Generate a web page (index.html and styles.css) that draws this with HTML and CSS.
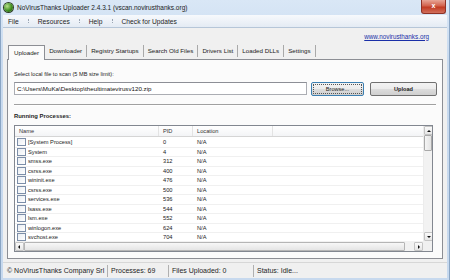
FILE: index.html
```html
<!DOCTYPE html>
<html lang="en">
<head>
    <meta charset="UTF-8">
    <title>NoVirusThanks Uploader 2.4.3.1</title>
    <link rel="stylesheet" href="styles.css">
</head>
<body>
    <div class="window">
        <!-- Barra de título -->
        <div class="titlebar">
            <span class="app-icon"></span>
            <span class="title">NoVirusThanks Uploader 2.4.3.1 (vscan.novirusthanks.org)</span>
            <span class="close-btn">x</span>
        </div>

        <!-- Menu -->
        <div class="menubar">
            <span class="menu-item">File</span>
            <span class="menu-sep"></span>
            <span class="menu-item">Resources</span>
            <span class="menu-sep"></span>
            <span class="menu-item">Help</span>
            <span class="menu-sep"></span>
            <span class="menu-item">Check for Updates</span>
        </div>

        <div class="client">
            <div class="link-row">
                <a href="#" class="site-link">www.novirusthanks.org</a>
            </div>

            <div class="tabs">
                <span class="tab active">Uploader</span>
                <span class="tab">Downloader</span>
                <span class="tab">Registry Startups</span>
                <span class="tab">Search Old Files</span>
                <span class="tab">Drivers List</span>
                <span class="tab">Loaded DLLs</span>
                <span class="tab">Settings</span>
            </div>

            <div class="panel">
                <div class="field-label">Select local file to scan (5 MB size limit):</div>
                <div class="file-row">
                    <div class="file-input">C:\Users\MuKa\Desktop\theultimatevirusv120.zip</div>
                    <button class="btn browse">Browse...</button>
                    <button class="btn upload">Upload</button>
                </div>
                <div class="separator"></div>
                <div class="field-label bold">Running Processes:</div>

                <div class="listview">
                    <div class="lv-top">
                        <div class="lv-body">
                            <div class="lv-row lv-head">
                                <span class="col-name">Name</span>
                                <span class="col-pid">PID</span>
                                <span class="col-loc">Location</span>
                            </div>
                            <div class="lv-row"><span class="col-name"><i class="check"></i>[System Process]</span><span class="col-pid">0</span><span class="col-loc">N/A</span></div>
                            <div class="lv-row"><span class="col-name"><i class="check"></i>System</span><span class="col-pid">4</span><span class="col-loc">N/A</span></div>
                            <div class="lv-row"><span class="col-name"><i class="check"></i>smss.exe</span><span class="col-pid">312</span><span class="col-loc">N/A</span></div>
                            <div class="lv-row"><span class="col-name"><i class="check"></i>csrss.exe</span><span class="col-pid">400</span><span class="col-loc">N/A</span></div>
                            <div class="lv-row"><span class="col-name"><i class="check"></i>wininit.exe</span><span class="col-pid">476</span><span class="col-loc">N/A</span></div>
                            <div class="lv-row"><span class="col-name"><i class="check"></i>csrss.exe</span><span class="col-pid">500</span><span class="col-loc">N/A</span></div>
                            <div class="lv-row"><span class="col-name"><i class="check"></i>services.exe</span><span class="col-pid">536</span><span class="col-loc">N/A</span></div>
                            <div class="lv-row"><span class="col-name"><i class="check"></i>lsass.exe</span><span class="col-pid">544</span><span class="col-loc">N/A</span></div>
                            <div class="lv-row"><span class="col-name"><i class="check"></i>lsm.exe</span><span class="col-pid">552</span><span class="col-loc">N/A</span></div>
                            <div class="lv-row"><span class="col-name"><i class="check"></i>winlogon.exe</span><span class="col-pid">624</span><span class="col-loc">N/A</span></div>
                            <div class="lv-row"><span class="col-name"><i class="check"></i>svchost.exe</span><span class="col-pid">704</span><span class="col-loc">N/A</span></div>
                        </div>
                        <div class="vscroll">
                            <span class="sb-btn up"></span>
                            <span class="sb-thumb v"></span>
                            <span class="sb-track"></span>
                            <span class="sb-btn down"></span>
                        </div>
                    </div>
                    <div class="lv-bottom">
                        <div class="hscroll">
                            <span class="sb-btn left"></span>
                            <span class="sb-thumb h"></span>
                            <span class="sb-btn right"></span>
                        </div>
                        <div class="sizebox"></div>
                    </div>
                </div>
            </div>

            <div class="statusbar">
                <span class="status-cell company">© NoVirusThanks Company Srl</span>
                <span class="status-cell procs">Processes: 69</span>
                <span class="status-cell files">Files Uploaded: 0</span>
                <span class="status-cell state">Status: Idle...</span>
            </div>
        </div>
    </div>
</body>
</html>
```

FILE: styles.css
```css
* {
    margin: 0;
    padding: 0;
    box-sizing: border-box;
    font-family: 'Liberation Sans', Arial, sans-serif;
}

body {
    width: 450px;
    height: 280px;
    overflow: hidden;
    background-color: #c3d6ec;
}

.window {
    width: 450px;
    height: 280px;
    display: flex;
    flex-direction: column;
    border-left: 1px solid #8aa5c4;
    border-right: 1px solid #8aa5c4;
    background: linear-gradient(#d9e7f6, #c8daef 60px, #c7d9ee);
}

/* Barra de título */
.titlebar {
    height: 16px;
    display: flex;
    align-items: center;
    padding-left: 3px;
    position: relative;
}

.app-icon {
    width: 9px;
    height: 9px;
    border-radius: 50%;
    background: radial-gradient(circle at 35% 35%, #b7e08a, #3f8f1f 55%, #1f4d10);
    box-shadow: 0 0 0 1px #2f3d26;
}

.title {
    font-size: 6.5px;
    color: #1a1a1a;
    margin-left: 4px;
}

.close-btn {
    position: absolute;
    top: 0;
    right: 3px;
    width: 25px;
    height: 14px;
    border: 1px solid #8e3226;
    border-top: none;
    border-radius: 0 0 3px 3px;
    background: linear-gradient(#e7a596, #d2624c 45%, #c23b22 55%, #d1705d);
    color: white;
    font-size: 7px;
    font-weight: bold;
    text-align: center;
    line-height: 12px;
}

/* Menu */
.menubar {
    height: 13px;
    margin: 0 2px;
    display: flex;
    align-items: center;
    padding-left: 5px;
    gap: 7px;
    background: linear-gradient(#f7f9fc, #e4ebf4);
    border-bottom: 1px solid #b6c6d8;
}

.menu-item {
    font-size: 6.7px;
    color: #1e1e1e;
}

.menu-sep {
    width: 1px;
    height: 4px;
    border-left: 1px dotted #9aa6b4;
    margin: 0 2px;
}

/* Área cliente */
.client {
    flex: 1;
    margin: 0 2px 2px 2px;
    background-color: #f0f0f0;
    display: flex;
    flex-direction: column;
    padding: 0 4px;
}

.link-row {
    height: 16px;
    display: flex;
    align-items: center;
    justify-content: flex-end;
    padding-right: 14px;
}

.site-link {
    font-size: 6.3px;
    color: #1a2fa8;
}

.tabs {
    height: 15px;
    display: flex;
    align-items: flex-end;
    padding-left: 4px;
}

.tab {
    font-size: 6.2px;
    color: #222;
    height: 12px;
    line-height: 11px;
    padding: 0 4px;
    border-right: 1px solid #a9a9a9;
    margin-bottom: 2px;
}

.tab.active {
    height: 15px;
    line-height: 14px;
    margin-bottom: -1px;
    margin-left: -3px;
    padding: 0 5px;
    background-color: #fbfbfb;
    border: 1px solid #8c8e94;
    border-bottom: none;
    position: relative;
    z-index: 1;
}

.panel {
    height: 200px;
    background-color: #fbfbfb;
    border: 1px solid #8c8e94;
    padding: 10px 5px 6px 6px;
    display: flex;
    flex-direction: column;
}

.field-label {
    font-size: 5.6px;
    color: #1e1e1e;
    line-height: 8px;
}

.field-label.bold {
    font-weight: bold;
    font-size: 5.9px;
}

.file-row {
    display: flex;
    align-items: flex-start;
    margin-top: 4px;
    height: 15px;
}

.file-input {
    flex: 1;
    height: 13px;
    border: 1px solid #abadb3;
    border-top-color: #8d8f96;
    background-color: white;
    font-size: 6.2px;
    line-height: 11px;
    padding-left: 2px;
    color: #111;
}

.btn {
    height: 14px;
    border: 1px solid #707070;
    border-radius: 2px;
    background: linear-gradient(#f3f3f3, #ebebeb 50%, #dddddd 51%, #cfcfcf);
    font-size: 5.6px;
    color: #222;
}

.browse {
    width: 53px;
    margin-left: 4px;
    outline: 1px dotted #555;
    outline-offset: -3px;
    border-color: #3c7fb1;
}

.upload {
    width: 67px;
    margin-left: 6px;
    font-weight: bold;
}

.separator {
    margin: 7px 1px 6px 0;
    border-top: 1px solid #a0a0a0;
    border-bottom: 1px solid #ffffff;
}

.listview {
    margin-top: 5px;
    margin-right: 4px;
    flex: 1;
    border: 1px solid #828790;
    background-color: white;
    display: flex;
    flex-direction: column;
    overflow: hidden;
}

.lv-top {
    flex: 1;
    display: flex;
    overflow: hidden;
}

.lv-body {
    flex: 1;
    overflow: hidden;
}

.lv-row {
    display: flex;
    height: 9.5px;
    align-items: center;
    border-bottom: 1px solid #f0f0f0;
    font-size: 5.7px;
    color: #1a1a1a;
}

.lv-head {
    height: 11px;
    background: linear-gradient(#ffffff, #f3f4f6);
    border-bottom: 1px solid #d5d5d5;
    color: #333;
    margin-bottom: 1px;
}

.lv-head span {
    border-right: 1px solid #e3e3e3;
    height: 100%;
    display: flex;
    align-items: center;
}

.col-name {
    width: 144px;
    padding-left: 4px;
    display: flex;
    align-items: center;
}

.lv-row .col-name {
    padding-left: 2px;
}

.lv-head .col-name {
    padding-left: 4px;
}

.col-pid {
    width: 34px;
    padding-left: 4px;
}

.col-loc {
    width: 80px;
    padding-left: 4px;
}

.check {
    width: 9px;
    height: 8px;
    border: 1px solid #7c8ea8;
    background: linear-gradient(135deg, #e9edf2, #ffffff);
    margin-right: 2px;
}

/* Barras de rolagem */
.vscroll {
    width: 9px;
    background-color: #f2f2f2;
    display: flex;
    flex-direction: column;
    border-left: 1px solid #ececec;
}

.sb-btn {
    width: 9px;
    height: 9px;
    border: 1px solid #c4c4c4;
    border-radius: 1px;
    background: linear-gradient(#fafafa, #e6e6e6);
    position: relative;
}

.sb-btn::after {
    content: '';
    position: absolute;
    left: 2px;
    top: 2px;
    border: 2px solid transparent;
}

.sb-btn.up::after {
    top: 1px;
    border-bottom-color: #111;
}

.sb-btn.down::after {
    top: 3px;
    border-top-color: #111;
}

.sb-btn.left::after {
    left: 0;
    border-right-color: #111;
}

.sb-btn.right::after {
    left: 3px;
    border-left-color: #111;
}

.sb-thumb.v {
    height: 16px;
    border: 1px solid #a9a9a9;
    border-radius: 1px;
    background: linear-gradient(90deg, #f5f5f5, #e3e3e3);
}

.sb-track {
    flex: 1;
}

.lv-bottom {
    height: 10px;
    display: flex;
}

.hscroll {
    flex: 1;
    display: flex;
    background-color: #f2f2f2;
    padding-top: 1px;
}

.sb-thumb.h {
    flex: 1;
    margin-right: 9px;
    border: 1px solid #b5b5b5;
    border-radius: 1px;
    background: linear-gradient(#f7f7f7, #e5e5e5);
}

.sizebox {
    width: 9px;
    background-color: #f0f0f0;
}

/* Barra de status */
.statusbar {
    height: 16px;
    margin: 3px -4px 0 -4px;
    display: flex;
    align-items: center;
    border-top: 1px solid #d7d7d7;
    background-color: #f0f0f0;
    padding-left: 2px;
}

.status-cell {
    font-size: 7px;
    color: #1e1e1e;
    height: 12px;
    line-height: 12px;
    padding-left: 2px;
    border-right: 1px solid #b0b0b0;
}

.company {
    width: 103px;
}

.procs {
    width: 61px;
    padding-left: 3px;
}

.files {
    width: 85px;
    padding-left: 3px;
}

.state {
    flex: 1;
    border-right: none;
    padding-left: 3px;
}
```
